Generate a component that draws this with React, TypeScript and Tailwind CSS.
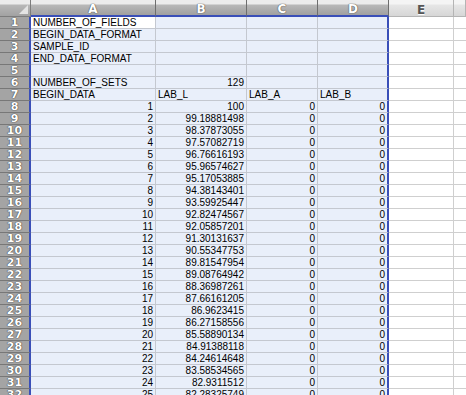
import React from 'react';

const colWidths = ['w-[125px]', 'w-[91px]', 'w-[71px]', 'w-[71px]', 'w-[65px]', 'flex-1'];
const letters = ['A', 'B', 'C', 'D', 'E', ''];

const labL = [
  '100', '99.18881498', '98.37873055', '97.57082719', '96.76616193', '95.96574627',
  '95.17053885', '94.38143401', '93.59925447', '92.82474567', '92.05857201', '91.30131637',
  '90.55347753', '89.81547954', '89.08764942', '88.36987261', '87.66161205', '86.9623415',
  '86.27158556', '85.58890134', '84.91388118', '84.24614648', '83.58534565', '82.9311512',
  '82.28325749',
];

type Cell = { text?: string; right?: boolean };

function buildRows(): Cell[][] {
  const rows: Cell[][] = [
    [{ text: 'NUMBER_OF_FIELDS' }, {}, {}, {}],
    [{ text: 'BEGIN_DATA_FORMAT' }, {}, {}, {}],
    [{ text: 'SAMPLE_ID' }, {}, {}, {}],
    [{ text: 'END_DATA_FORMAT' }, {}, {}, {}],
    [{}, {}, {}, {}],
    [{ text: 'NUMBER_OF_SETS' }, { text: '129', right: true }, {}, {}],
    [{ text: 'BEGIN_DATA' }, { text: 'LAB_L' }, { text: 'LAB_A' }, { text: 'LAB_B' }],
  ];
  labL.forEach((v, i) => {
    rows.push([
      { text: String(i + 1), right: true },
      { text: v, right: true },
      { text: '0', right: true },
      { text: '0', right: true },
    ]);
  });
  return rows;
}

function ColumnHeader() {
  return (
    <div className="flex h-[17px]">
      <div className="relative w-[31px] h-[17px] border-r border-b border-[#7c7c7c] bg-[linear-gradient(#ececec_0,#ececec_4px,#b8b8b8_5px,#a2a2a2)]">
        <svg className="absolute right-[2px] bottom-[2px]" width="9" height="9" viewBox="0 0 9 9">
          <polygon points="9,0 9,9 0,9" fill="#e4e4e4" />
        </svg>
      </div>
      {letters.map((l, i) => {
        const selected = i < 4;
        return (
          <div
            key={i}
            className={`${colWidths[i]} h-[17px] shrink-0 border-r flex items-center justify-center pt-[4px] text-[12px] font-bold leading-[11px] font-['DejaVu_Sans',sans-serif] ${
              selected
                ? 'border-[#6e6e6e] border-b-2 border-b-[#3a4fb8] bg-[linear-gradient(#ececec_0,#ececec_4px,#b8b8b8_5px,#a0a0a0)] text-white [text-shadow:0_0_1px_#444,0_0_1px_#444]'
                : 'border-[#b4b4b4] border-b border-b-[#b4b4b4] bg-[linear-gradient(#f4f4f4_0,#f4f4f4_4px,#e6e6e6_5px,#d6d6d6)] text-[#555] [text-shadow:0_1px_0_#fff]'
            }`}
          >
            {l}
          </div>
        );
      })}
    </div>
  );
}

export default function App() {
  const rows = buildRows();
  return (
    <div className="w-[466px] h-[395px] overflow-hidden bg-white font-['Liberation_Sans',Arial,sans-serif] text-[10px] text-black">
      <ColumnHeader />
      {rows.map((cells, r) => (
        <div key={r} className="flex h-[12px]">
          <div className="w-[31px] h-[12px] shrink-0 border-b border-[#777] border-r-2 border-r-[#3a4fb8] bg-[#a4a4a4] text-center text-[11px] font-bold leading-[11px] font-['DejaVu_Sans',sans-serif] text-white [text-shadow:0_0_1px_#333,0_0_1px_#333]">
            {r + 1}
          </div>
          {cells.map((c, i) => {
            const active = r === 0 && i === 0;
            return (
              <div
                key={i}
                className={`${colWidths[i]} h-[12px] shrink-0 border-b border-r overflow-hidden whitespace-nowrap px-[2px] leading-[11px] ${
                  c.right ? 'text-right' : 'text-left'
                } ${active ? 'bg-white border-[#c4c8d0]' : 'bg-[#e9effa] border-[#c4c8d0]'} ${
                  i === 3 ? 'border-r-2 border-r-[#3a4fb8]' : ''
                }`}
              >
                {c.text}
              </div>
            );
          })}
          <div className="w-[65px] h-[12px] shrink-0 border-b border-r border-[#cfcfcf] bg-white" />
          <div className="flex-1 h-[12px] border-b border-[#cfcfcf] bg-white" />
        </div>
      ))}
    </div>
  );
}
